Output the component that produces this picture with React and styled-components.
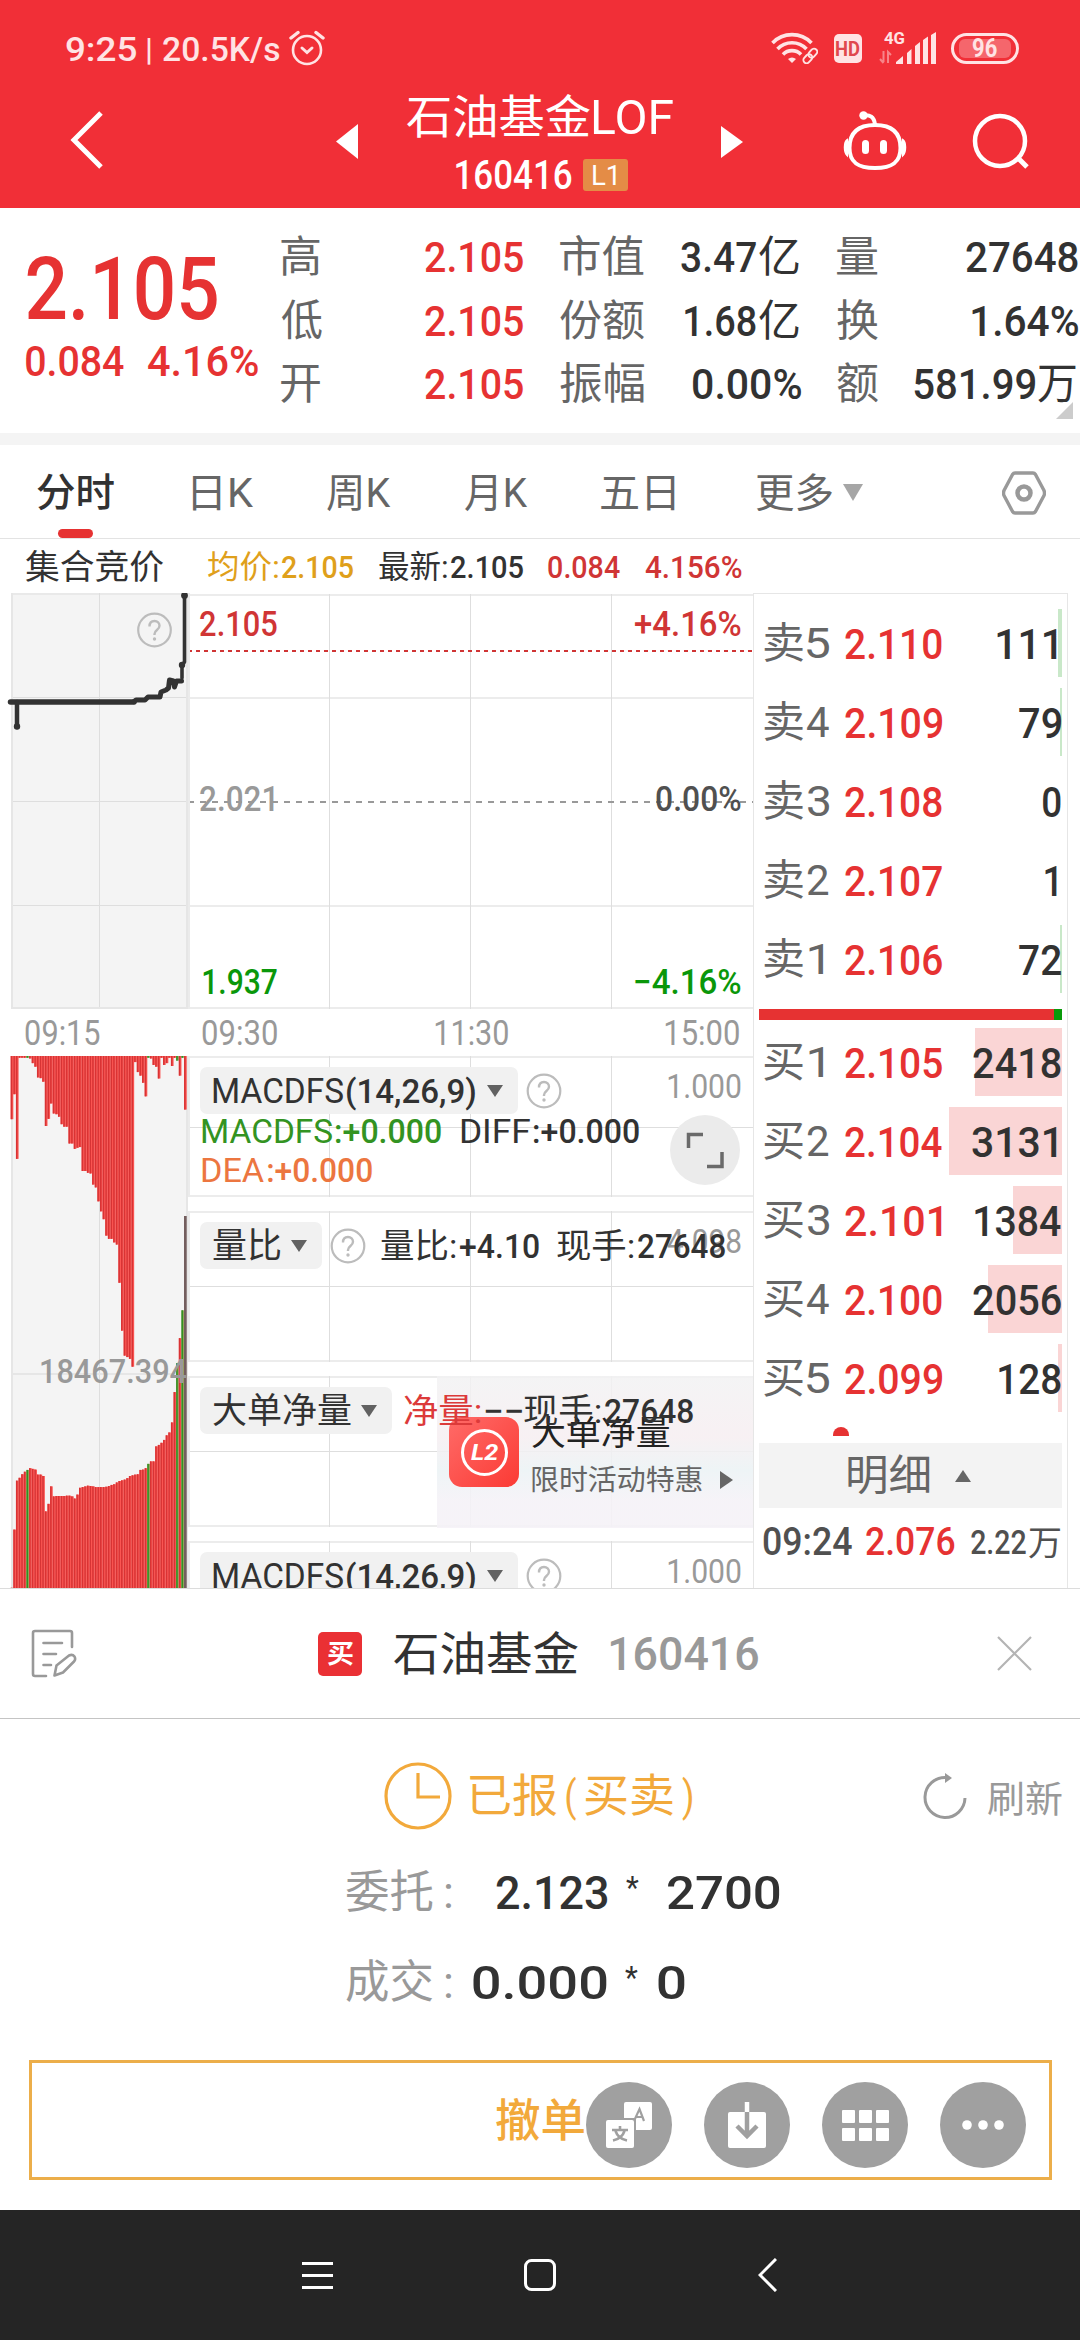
import React from 'react'
import styled, { createGlobalStyle } from 'styled-components'

const FONT = 'Roboto, "Noto Sans CJK SC", sans-serif'
const RED = '#e63232'
const DARK = '#323232'
const MID = '#666666'
const SOFT = '#999999'
const GREEN = '#0a970a'
const ORANGE = '#f2a93b'

const GlobalStyle = createGlobalStyle`
*{ box-sizing: border-box; }
body{
margin: 0;
background: #fff;
font-family: ${FONT};
}
svg{ display: block; flex: none; }
`

/* ---------- condensed text ---------- */

const Slot = styled.span`
display: block;
flex: none;
width: ${p => p.$w}px;
margin-left: ${p => p.$ml || 0}px;
font-size: ${p => p.$size}px;
font-weight: ${p => p.$weight};
font-style: ${p => p.$italic ? "italic" : "normal"};
color: ${p => p.$color};
line-height: 1.2;
white-space: nowrap;
`
const Glyphs = styled.span`
display: inline-block;
transform-origin: 0 50%;
`

const ctx = document.createElement("canvas").getContext("2d")

// squeezes the text so its ink is exactly w wide, the way the condensed digits run
function T({ w, ml, size = 43, color = DARK, weight = 500, italic, children }) {
    ctx.font = `${italic ? "italic " : ""}${weight} ${size}px ${FONT}`
    const m = ctx.measureText(children)
    const scale = w / (m.actualBoundingBoxRight + m.actualBoundingBoxLeft)
    const style = { transform: `translate(${m.actualBoundingBoxLeft * scale}px, 1px) scaleX(${scale})` }
    return (
        <Slot $w={w} $ml={ml} $size={size} $weight={weight} $italic={italic} $color={color}>
            <Glyphs style={style}>{children}</Glyphs>
        </Slot>
    )
}

const Page = styled.div`
width: 1080px;
height: 2340px;
overflow: hidden;
display: flex;
flex-direction: column;
background: #fff;
`
const Row = styled.div`
display: flex;
align-items: center;
flex: none;
height: ${p => p.$h}px;
padding-left: ${p => p.$pl || 0}px;
margin-top: ${p => p.$mt || 0}px;
`
const Push = styled.div`
flex: none;
margin-left: ${p => p.$ml}px;
`

/* ---------- header ---------- */

const Header = styled.header`
flex: none;
height: 208px;
background: #f12f37;
`
const TitleBar = styled.div`
display: flex;
height: 112px;
padding-left: 69px;
`
const TitleBlock = styled.div`
width: 266px;
margin-left: 48px;
`
const LevelTag = styled.div`
display: flex;
align-items: center;
width: 45px;
height: 32px;
margin-left: 11px;
padding-left: 10px;
border-radius: 3px;
background: #e48c46;
`
const HdTag = styled.div`
display: flex;
align-items: center;
width: 28px;
height: 29px;
margin-left: 16px;
padding-left: 2px;
border-radius: 5px;
background: #ffe3e4;
`
const Battery = styled.div`
display: flex;
align-items: center;
justify-content: center;
width: 68px;
height: 31px;
margin-left: 15px;
border: 3px solid #ffe3e4;
border-radius: 16px;
padding: 4px 5px;
`
const Charge = styled.div`
display: flex;
align-items: center;
justify-content: center;
width: 54px;
height: 19px;
border-radius: 6px;
background: #f5666c;
`

const Alarm = () => (
    <svg width="36" height="36" viewBox="0 0 36 36" fill="none" stroke="#ffe3e4" strokeLinecap="round">
        <circle cx="18" cy="20" r="14" strokeWidth="2.6" />
        <path d="M13 18l5 4.5 5-4.5" strokeWidth="3" />
        <path d="M2 8l7-5.5M34 8l-7-5.5" strokeWidth="3.4" />
    </svg>
)

const Wifi = () => (
    <svg width="47" height="32" viewBox="0 0 47 32" fill="none" stroke="#ffe3e4">
        <path d="M1.5 11a27 27 0 0 1 39 0" strokeWidth="3.6" />
        <path d="M6.5 17a20 20 0 0 1 29 0" strokeWidth="3.6" />
        <path d="M12 22.5a12.5 12.5 0 0 1 18 0" strokeWidth="3.6" />
        <path d="M17 27a6 6 0 0 1 8 0l-4 4z" fill="#ffe3e4" stroke="none" />
        <g strokeWidth="1.9" transform="rotate(-48 39 24)">
            <rect x="30.5" y="21" width="10" height="6.4" rx="3.2" />
            <rect x="38" y="21" width="10" height="6.4" rx="3.2" />
        </g>
    </svg>
)

const Signal = () => (
    <svg width="57" height="34" viewBox="0 0 57 34" fill="#ffe3e4" overflow="visible">
        <text x="5" y="13" fontSize="16" fontWeight="700" textLength="21" lengthAdjust="spacingAndGlyphs">4G</text>
        <path d="M17 33v-2l7-6v8zM28 33V22l4.500-4v15zM36 33V15l5-4v22zM44 33V9l5-3.500V33zM52 33V4l5-3v32z" />
        <path d="M4.500 20v11M1 28l3.500 4M9 32V21l3 3" fill="none" stroke="#f78489" strokeWidth="2" />
    </svg>
)

const Robot = () => (
    <svg width="66" height="62" viewBox="0 0 66 62" fill="none" stroke="#fff" strokeWidth="4">
        <path d="M33 15c17 0 25.500 8 25.500 23 0 14-8 20-25.500 20S7.500 52 7.500 38C7.500 23 16 15 33 15z" />
        <path d="M21 5.500c7-1 11 1 12 9" />
        <circle cx="21.500" cy="5.500" r="4.200" fill="#fff" stroke="none" />
        <path d="M5 30c-3 2-3 12 0 15zM61 30c3 2 3 12 0 15z" fill="#fff" strokeWidth="2" />
        <rect x="20" y="30" width="7" height="14" rx="3.500" fill="#fff" stroke="none" />
        <rect x="38" y="30" width="7" height="14" rx="3.500" fill="#fff" stroke="none" />
    </svg>
)

function StatusBar() {
    const pale = "#ffe3e4"
    return (
        <Row $h={96} $pl={66}>
            <T w={70} size={34} color={pale}>9:25</T>
            <T w={4} ml={11} size={32} color={pale}>|</T>
            <T w={117} ml={12} size={34} color={pale}>20.5K/s</T>
            <Push $ml={9}><Alarm /></Push>
            <Push $ml={446}><Wifi /></Push>
            <HdTag><T w={24} size={20} weight={700} color="#e0474d">HD</T></HdTag>
            <Push $ml={17}><Signal /></Push>
            <Battery><Charge><T w={24} size={25} weight={700} color={pale}>96</T></Charge></Battery>
        </Row>
    )
}

/* ---------- quote ---------- */

const Quote = styled.section`
display: flex;
flex: none;
height: 225px;
`
const PriceBlock = styled.div`
width: 281px;
padding: 32px 0 0 26px;
`
const Figures = styled.div`
position: relative;
width: 799px;
padding-top: 17px;
`
const MoreCorner = styled.svg`
position: absolute;
right: 7px;
bottom: 14px;
`
const Band = styled.div`
flex: none;
height: 12px;
background: #f4f4f4;
`

const Label = ({ w, ml, children }) => <T w={w} ml={ml} color={MID} weight={400} size={43}>{children}</T>

/* ---------- tabs ---------- */

const Tabs = styled.nav`
position: relative;
display: flex;
flex: none;
align-items: center;
height: 94px;
padding: 2px 0 0 37px;
border-bottom: 1px solid #e3e3e3;
`
const TabMark = styled.div`
position: absolute;
left: 58px;
bottom: 0;
width: 35px;
height: 9px;
border-radius: 5px;
background: ${RED};
`

/* ---------- charts ---------- */

const Board = styled.section`
display: flex;
flex: none;
height: 995px;
overflow: hidden;
`
const Auction = styled.div`
flex: none;
width: 188px;
`
const Session = styled.div`
flex: none;
width: 565px;
`
const Backdrop = styled.svg`
position: absolute;
left: 0;
top: 0;
`
const Plot = styled.div`
position: relative;
height: 416px;
padding-top: 12px;
`
const Indicator = styled.div`
position: relative;
height: ${p => p.$h}px;
margin-bottom: 14px;
padding-top: 11px;
`
const Over = styled.div`
position: relative;
`
const Picker = styled.div`
display: flex;
align-items: center;
flex: none;
width: ${p => p.$w}px;
height: 47px;
margin-left: 12px;
padding-left: 13px;
border-radius: 7px;
background: #f1f1f1;
`
const Scale = styled.div`
position: absolute;
top: 9px;
right: 12px;
`
const Expand = styled.div`
position: absolute;
left: 482px;
top: 59px;
`
const Promo = styled.div`
position: absolute;
left: 249px;
top: 0;
display: flex;
width: 316px;
height: 152px;
padding: 41px 0 0 12px;
background: linear-gradient(180deg, rgba(242,242,243,.85), rgba(246,238,241,.85) 40%, rgba(236,243,245,.9) 62%, rgba(245,242,247,.9) 82%);
`
const PromoIcon = styled.div`
display: flex;
align-items: center;
justify-content: center;
width: 70px;
height: 70px;
border-radius: 13px;
background: linear-gradient(135deg, #ff6b68, #fb3a34);
`
const Ring = styled.div`
display: flex;
align-items: center;
justify-content: center;
width: 47px;
height: 47px;
border: 3px solid #fff;
border-radius: 50%;
`
const PromoText = styled.div`
margin-left: 13px;
margin-top: -6px;
`

const Help = () => (
    <svg width="36" height="36" viewBox="0 0 36 36">
        <circle cx="18" cy="18" r="16.300" fill="none" stroke="#bcbcbc" strokeWidth="2.200" />
        <path d="M13 14.500c0-3.500 2-5.500 5-5.500s5 2 5 4.700c0 4.300-5 4.300-5 8.300v1" fill="none" stroke="#bcbcbc" strokeWidth="2.400" />
        <circle cx="18" cy="27" r="1.700" fill="#bcbcbc" />
    </svg>
)
const Down = () => <svg width="16" height="12"><path d="M0 0h16L8 12z" fill="#626262" /></svg>

const VLINES = [141.5, 282.5, 423.5]

function Grid({ h, mid }) {
    return (
        <Backdrop width="565" height={h}>
            <path d={`M0 1H565M0 ${h - 1}H565`} stroke="#ececec" strokeWidth="2" />
            {mid && <path d={`M0 ${mid}H565`} stroke="#dedede" />}
            {VLINES.map(x => <path key={x} d={`M${x} 0V${h}`} stroke="#dedede" />)}
            <path d={`M1 0V${h}`} stroke="#ebebeb" strokeWidth="2" />
        </Backdrop>
    )
}

const drops = [222, 152, 333, 50, 50, 50, 50, 52, 65, 75, 105, 107, 117, 241, 221, 178, 206, 208, 215, 236, 243, 243, 290,
    290, 305, 302, 300, 367, 367, 372, 374, 405, 413, 452, 480, 502, 548, 557, 557, 567, 573, 680, 814, 884, 888, 893, 915,
    62, 90, 100, 120, 158, 50, 52, 70, 75, 108, 50, 70, 65, 50, 73, 50, 58, 100, 50, 195]
const rises = [1534, 1371, 1234, 1226, 1216, 1209, 1204, 1199, 1201, 1203, 1217, 1217, 1221, 1320, 1299, 1250, 1278, 1277,
    1277, 1277, 1277, 1276, 1276, 1278, 1284, 1273, 1254, 1252, 1250, 1248, 1249, 1250, 1252, 1252, 1252, 1252, 1251, 1249,
    1246, 1244, 1239, 1235, 1233, 1231, 1227, 1221, 1219, 1217, 1216, 1204, 1203, 1199, 1187, 1180, 1180, 1138, 1134, 1128,
    1120, 1107, 1099, 1071, 986, 905, 835, 757, 493]
const fallers = [6, 52, 63, 65]

function AuctionPrice() {
    return (
        <svg width="188" height="416">
            <rect x="11" width="177" height="416" fill="#f4f4f4" />
            <path d="M11 1H188M11 104.500H188M11 208.500H188M11 312.500H188M99.500 0V416" stroke="#dedede" fill="none" />
            <path d="M12 0V416M187 0V416M11 415H188" stroke="#e6e6e6" strokeWidth="2" />
            <g fill="none" stroke="#323232" strokeLinejoin="round" strokeLinecap="round">
                <path d="M10.500 109H134" strokeWidth="5.500" />
                <path d="M17 109V134" strokeWidth="4.500" />
                <path d="M134 108.500l2-1.500h9l3-3h12l1-5 5-2 2.500-2 1-8 4 1 1 6 2-6h5" strokeWidth="5" />
                <path d="M182 85V72l2.500-3V3" strokeWidth="3.600" />
            </g>
            <g fill="#323232">
                <circle cx="17" cy="133.500" r="3.200" />
                <circle cx="182" cy="72" r="3.200" />
                <circle cx="184.500" cy="2.500" r="3.400" />
            </g>
            <g transform="translate(136.500 19)"><Help /></g>
        </svg>
    )
}

function AuctionVolume() {
    const step = 2.627
    return (
        <svg width="188" height="532">
            <rect x="11" width="177" height="532" fill="#f4f4f4" />
            <path d="M99.500 0V532" stroke="#dedede" />
            <path d="M11 318H188M12 0V532M187 0V532" stroke="#e6e6e6" strokeWidth="2" />
            {drops.map((y, i) => (
                <g key={i} transform={`translate(${10.7 + i * step} 0)`}>
                    <rect width={step} height={(y - 45) / 2.8} fill={fallers.includes(i) ? "#7ba95a" : "#fb5552"} />
                    <rect width="1.500" height={(y - 45) / 2.8} fill={fallers.includes(i) ? "#2f9020" : "#d83334"} />
                </g>
            ))}
            {rises.map((y, i) => (
                <g key={i} transform={`translate(${10.7 + i * step} ${(y - 45) / 2.8})`}>
                    <rect width={step} height={532} fill={i === 66 ? "#735e5e" : fallers.includes(i) ? "#8fa357" : "#fb5552"} />
                    <rect width="1.500" height={532} fill={i === 66 ? "#735e5e" : fallers.includes(i) ? "#2f9020" : "#d83334"} />
                </g>
            ))}
            <text x="39" y="326.500" fontSize="34" fontWeight="500" fill="#999" textLength="148" lengthAdjust="spacingAndGlyphs">18467.394</text>
        </svg>
    )
}

function MacdPicker() {
    return (
        <Row $h={47}>
            <Picker $w={318}>
                <T w={130} size={35.5} weight={400}>MACDFS</T>
                <T w={128} ml={4} size={34}>(14,26,9)</T>
                <Push $ml={12}><Down /></Push>
            </Picker>
            <Push $ml={8}><Help /></Push>
        </Row>
    )
}

/* ---------- order book ---------- */

const Book = styled.aside`
flex: none;
width: 315px;
padding-top: 10px;
border: 1px solid #e6e6e6;
border-bottom: 0;
`
const Level = styled.div`
position: relative;
display: flex;
align-items: center;
height: 79px;
padding-left: 10px;
`
const Depth = styled.div`
position: absolute;
right: 5px;
top: 5px;
height: 68px;
width: ${p => p.$w}px;
background: ${p => p.$sell ? "#c9e8c9" : "#fad5d5"};
`
const Amount = styled.div`
position: absolute;
right: ${p => p.$right}px;
`
const Ratio = styled.div`
width: 303px;
height: 11px;
margin: 10px 0 3px 5px;
border-right: 8px solid #0a9a0a;
background: ${RED};
`
const DotClip = styled.div`
height: 9px;
width: 16px;
margin: 9px 0 0 79px;
overflow: hidden;
&::before{
content: "";
display: block;
width: 16px;
height: 16px;
border-radius: 50%;
background: ${RED};
}
`
const Detail = styled.div`
display: flex;
align-items: center;
width: 303px;
height: 65px;
margin: 7px 0 0 5px;
padding-left: 89px;
background: #f3f3f3;
`

const sells = [
    ["卖", "5", "2.110", "111", 60, 4],
    ["卖", "4", "2.109", "79", 42, 2],
    ["卖", "3", "2.108", "0", 18, 0],
    ["卖", "2", "2.107", "1", 12, 0],
    ["卖", "1", "2.106", "72", 42, 2],
]
const buys = [
    ["买", "1", "2.105", "2418", 88, 87],
    ["买", "2", "2.104", "3131", 85, 113],
    ["买", "3", "2.101", "1384", 86, 49],
    ["买", "4", "2.100", "2056", 88, 74],
    ["买", "5", "2.099", "128", 62, 4],
]

const BookRow = ({ row, sell }) => {
    const [side, n, price, amount, w, depth] = row
    return (
        <Level>
            {depth > 0 && <Depth $w={depth} $sell={sell} />}
            <T w={39} color={MID} weight={400} size={42}>{side}</T>
            <T w={n === "1" ? 14 : 22} ml={n === "1" ? 6 : 4} color={MID} weight={400} size={42}>{n}</T>
            <T w={97} ml={n === "1" ? 22 : 16} color={RED}>{price}</T>
            <Amount $right={amount.endsWith("1") ? 10 : 6}><T w={w}>{amount}</T></Amount>
        </Level>
    )
}

/* ---------- order sheet ---------- */

const Sheet = styled.section`
flex: none;
height: 622px;
border-top: 1px solid #dcdcdc;
`
const SheetHead = styled.div`
display: flex;
align-items: center;
height: 130px;
padding-left: 31px;
border-bottom: 1px solid #c4c4c4;
`
const BuyTag = styled.div`
display: flex;
align-items: center;
justify-content: center;
width: 44px;
height: 44px;
margin-left: 241px;
border-radius: 5px;
background: #ea3034;
`
const Star = styled.div`
height: 50px;
`
const CancelButton = styled.button`
display: flex;
align-items: center;
width: 1023px;
height: 120px;
margin: 33px 0 0 29px;
padding: 10px 0 0 464px;
border: 3px solid #ecae4a;
background: #fff;
font-family: inherit;
`
const CancelText = styled.span`
padding-bottom: 9px;
`
const Round = styled.span`
display: flex;
flex: none;
align-items: center;
justify-content: center;
width: 86px;
height: 86px;
margin-left: ${p => p.$ml}px;
border-radius: 50%;
background: #a0a0a0;
`
const NavBar = styled.footer`
display: flex;
flex: none;
align-items: center;
height: 130px;
padding-left: 302px;
background: #252525;
`

const Note = () => (
    <svg width="46" height="50" viewBox="0 0 46 50" fill="none" stroke="#999" strokeWidth="2.600" strokeLinecap="round" strokeLinejoin="round">
        <path d="M41 18V4q0-2-2-2H4Q2 2 2 4V45q0 2 2 2h11" />
        <path d="M12.500 14H31M12.500 25H25M12.500 36H20" />
        <path d="M23.500 46.500l2-10L38 26.500q3.500-1.500 5.500 1 1.500 3-.5 5L32 43.500z" />
    </svg>
)

export default function App() {
    return (
        <Page>
            <GlobalStyle />
            <Header>
                <StatusBar />
                <TitleBar>
                    <svg width="36" height="80"><path d="M32 17L5 44 32 71" fill="none" stroke="#fff" strokeWidth="5" /></svg>
                    <svg width="254" height="70"><path d="M231 45.500L253 28v35z" fill="#fff" /></svg>
                    <TitleBlock>
                        <Row $h={42}>
                            <T w={183} size={46} weight={400} color="#fff">石油基金</T>
                            <T w={79} ml={4} size={49} weight={400} color="#fff">LOF</T>
                        </Row>
                        <Row $h={32} $mt={21} $pl={49}>
                            <T w={116} size={40} color="#fff">160416</T>
                            <LevelTag><T w={23} size={27} weight={400} color="#fff">L1</T></LevelTag>
                        </Row>
                    </TitleBlock>
                    <Push $ml={48}><svg width="23" height="70"><path d="M0 30v32l22-16z" fill="#fff" /></svg></Push>
                    <Row $h={90} $pl={98}>
                        <Robot />
                        <Push $ml={64}>
                            <svg width="60" height="60" fill="none" stroke="#fff" strokeWidth="4.500">
                                <circle cx="28" cy="30" r="25" />
                                <path d="M46 47l9 9" strokeWidth="5" />
                            </svg>
                        </Push>
                    </Row>
                </TitleBar>
            </Header>

            <Quote>
                <PriceBlock>
                    <Row $h={96}><T w={190} ml={1} size={88} color={RED}>2.105</T></Row>
                    <Row $h={50}>
                        <T w={98} color={RED}>0.084</T>
                        <T w={110} ml={24} color={RED}>4.16%</T>
                    </Row>
                </PriceBlock>
                <Figures>
                    <Row $h={64}>
                        <Label w={39}>高</Label>
                        <T w={98} ml={105} color={RED}>2.105</T>
                        <Label w={84} ml={37}>市值</Label>
                        <T w={75} ml={37}>3.47</T><T w={40} ml={3} weight={400}>亿</T>
                        <Label w={41} ml={38}>量</Label>
                        <T w={112} ml={88}>27648</T>
                    </Row>
                    <Row $h={63}>
                        <Label w={41}>低</Label>
                        <T w={98} ml={103} color={RED}>2.105</T>
                        <Label w={84} ml={37}>份额</Label>
                        <T w={71} ml={41}>1.68</T><T w={40} ml={3} weight={400}>亿</T>
                        <Label w={41} ml={38}>换</Label>
                        <T w={106} ml={94}>1.64%</T>
                    </Row>
                    <Row $h={64}>
                        <Label w={39}>开</Label>
                        <T w={98} ml={105} color={RED}>2.105</T>
                        <Label w={84} ml={37}>振幅</Label>
                        <T w={108} ml={49}>0.00%</T>
                        <Label w={41} ml={36}>额</Label>
                        <T w={121} ml={36}>581.99</T><T w={38} ml={3} weight={400}>万</T>
                    </Row>
                    <MoreCorner width="17" height="17"><path d="M17 0V17H0z" fill="#ccc" /></MoreCorner>
                </Figures>
            </Quote>
            <Band />

            <Tabs>
                <T w={77} size={39}>分时</T>
                <T w={61} ml={79} size={40} weight={400} color={MID}>日K</T>
                <T w={64} ml={73} size={40} weight={400} color={MID}>周K</T>
                <T w={63} ml={74} size={40} weight={400} color={MID}>月K</T>
                <T w={74} ml={73} size={40} weight={400} color={MID}>五日</T>
                <T w={76} ml={81} size={40} weight={400} color={MID}>更多</T>
                <Push $ml={11}><svg width="20" height="17"><path d="M0 0H20L10 17z" fill="#a6a6a6" /></svg></Push>
                <Push $ml={139}>
                    <svg width="44" height="44" fill="none" stroke="#999" strokeWidth="3.400" strokeLinejoin="round">
                        <path d="M13 2H31Q32.500 2 33.500 3.500L42 19.500Q43 22 42 24.500L33.500 40.500Q32.500 42 31 42H13Q11.500 42 10.500 40.500L2 24.500Q1 22 2 19.500L10.500 3.500Q11.500 2 13 2z" />
                        <circle cx="22" cy="22" r="6.500" strokeWidth="4.500" />
                    </svg>
                </Push>
                <TabMark />
            </Tabs>

            <Row $h={54} $pl={25}>
                <T w={138} size={34} weight={400}>集合竞价</T>
                <T w={70} ml={45} size={32} weight={400} color="#dfa01b">均价:</T>
                <T w={71} ml={4} size={32} color="#dfa01b">2.105</T>
                <T w={68} ml={26} size={32} weight={400}>最新:</T>
                <T w={72} ml={4} size={32}>2.105</T>
                <T w={72} ml={25} size={32} color="#d03535">0.084</T>
                <T w={97} ml={25} size={32} color="#d03535">4.156%</T>
            </Row>

            <Board>
                <Auction>
                    <AuctionPrice />
                    <Row $h={47} $pl={25}><T w={75} size={35} color={SOFT} weight={400}>09:15</T></Row>
                    <AuctionVolume />
                </Auction>

                <Session>
                    <Plot>
                        <Backdrop width="565" height="416">
                            <path d="M0 2H565M0 105H565M0 313H565M0 415H565" stroke="#ececec" strokeWidth="2" />
                            {VLINES.map(x => <path key={x} d={`M${x} 1V416`} stroke="#dedede" />)}
                            <path d="M0 58H565" stroke="#d03535" strokeWidth="2" strokeDasharray="4 4" />
                            <path d="M0 209H565" stroke="#999" strokeWidth="2" strokeDasharray="6 6" />
                            <path d="M1 0V416" stroke="#ebebeb" strokeWidth="2" />
                        </Backdrop>
                        <Over>
                            <Row $h={38} $pl={12}>
                                <T w={77} size={35} color="#d03535">2.105</T>
                                <T w={106} ml={358} size={35} color="#d03535">+4.16%</T>
                            </Row>
                            <Row $h={38} $pl={12} $mt={137}>
                                <T w={74} size={35} color={SOFT}>2.021</T>
                                <T w={85} ml={382} size={35} color="#505050">0.00%</T>
                            </Row>
                            <Row $h={38} $pl={15} $mt={145}>
                                <T w={74} size={35} color={GREEN}>1.937</T>
                                <T w={106} ml={358} size={35} color={GREEN}>−4.16%</T>
                            </Row>
                        </Over>
                    </Plot>
                    <Row $h={47} $pl={14}>
                        <T w={75} size={35} weight={400} color={SOFT}>09:30</T>
                        <T w={73} ml={158} size={35} weight={400} color={SOFT}>11:30</T>
                        <T w={74} ml={157} size={35} weight={400} color={SOFT}>15:00</T>
                    </Row>

                    <Indicator $h={141}>
                        <Grid h={141} mid={71.5} />
                        <Over>
                            <MacdPicker />
                            <Row $h={38} $pl={14} $mt={-3}>
                                <T w={130} size={34} weight={400} color="#339322">MACDFS</T>
                                <T w={105} ml={4} size={34} color="#339322">:+0.000</T>
                                <T w={69} ml={20} size={34} weight={400}>DIFF</T>
                                <T w={105} ml={4} size={34}>:+0.000</T>
                            </Row>
                            <Row $h={38} $pl={14} $mt={1}>
                                <T w={62} size={34} weight={400} color="#ec7640">DEA</T>
                                <T w={104} ml={4} size={34} color="#ec7640">:+0.000</T>
                            </Row>
                        </Over>
                        <Scale><T w={73} size={34} color={SOFT} weight={400}>1.000</T></Scale>
                        <Expand>
                            <svg width="70" height="70">
                                <circle cx="35" cy="35" r="35" fill="#ebebeb" />
                                <path d="M18.500 33V19.500H33M37 51.500H52V37" fill="none" stroke="#6a6a6a" strokeWidth="3.500" />
                            </svg>
                        </Expand>
                    </Indicator>

                    <Indicator $h={151}>
                        <Grid h={151} mid={75.5} />
                        <Scale><T w={74} size={34} color={SOFT} weight={400}>4.098</T></Scale>
                        <Over>
                            <Row $h={47}>
                                <Picker $w={122}>
                                    <T w={67} size={35} weight={400}>量比</T>
                                    <Push $ml={11}><Down /></Push>
                                </Picker>
                                <Push $ml={8}><Help /></Push>
                                <T w={75} ml={15} size={34} weight={400}>量比:</T>
                                <T w={79} ml={4} size={34}>+4.10</T>
                                <T w={77} ml={18} size={34} weight={400}>现手:</T>
                                <T w={87} ml={4} size={34}>27648</T>
                            </Row>
                        </Over>
                    </Indicator>

                    <Indicator $h={151}>
                        <Grid h={151} mid={75.5} />
                        <Promo>
                            <PromoIcon><Ring><T w={27} size={22} weight={700} italic color="#fff">L2</T></Ring></PromoIcon>
                            <PromoText>
                                <Row $h={44}><T w={137} size={34.5} weight={400} color="#222">大单净量</T></Row>
                                <Row $h={50}>
                                    <T w={170} size={28.5} weight={400} color={MID}>限时活动特惠</T>
                                    <Push $ml={18}><svg width="13" height="18"><path d="M0 0v18l13-9z" fill="#666" /></svg></Push>
                                </Row>
                            </PromoText>
                        </Promo>
                        <Over>
                            <Row $h={47}>
                                <Picker $w={192}>
                                    <T w={138} size={35} weight={400}>大单净量</T>
                                    <Push $ml={10}><Down /></Push>
                                </Picker>
                                <T w={77} ml={12} size={34} weight={400} color="#dc3a3a">净量:</T>
                                <T w={37} ml={4} size={34}>−−</T>
                                <T w={77} ml={2} size={34} weight={400}>现手:</T>
                                <T w={88} ml={4} size={34}>27648</T>
                            </Row>
                        </Over>
                    </Indicator>

                    <Indicator $h={151}>
                        <Grid h={151} />
                        <Over><MacdPicker /></Over>
                        <Scale><T w={73} size={34} color={SOFT} weight={400}>1.000</T></Scale>
                    </Indicator>
                </Session>

                <Book>
                    {sells.map(r => <BookRow key={r[1]} row={r} sell />)}
                    <Ratio />
                    {buys.map(r => <BookRow key={r[1]} row={r} />)}
                    <DotClip />
                    <Detail>
                        <T w={82} size={42} weight={400} color={MID}>明细</T>
                        <Push $ml={25}><svg width="16" height="12"><path d="M0 12H16L8 0z" fill="#666" /></svg></Push>
                    </Detail>
                    <Row $h={68} $pl={9}>
                        <T w={89} size={38} color="#505050">09:24</T>
                        <T w={89} ml={14} size={38} color={RED}>2.076</T>
                        <T w={55} ml={16} size={33} color="#505050">2.22</T>
                        <T w={31} ml={3} size={34} weight={400} color="#505050">万</T>
                    </Row>
                </Book>
            </Board>

            <Sheet>
                <SheetHead>
                    <Note />
                    <BuyTag><T w={26} size={26} weight={700} color="#fff">买</T></BuyTag>
                    <T w={184} ml={32} size={46} weight={400}>石油基金</T>
                    <T w={148} ml={32} size={47} weight={500} color={SOFT}>160416</T>
                    <Push $ml={239}><svg width="35" height="35"><path d="M1 1L34 34M34 1L1 34" stroke="#b4b4b4" strokeWidth="2.200" /></svg></Push>
                </SheetHead>

                <Row $h={68} $mt={43} $pl={384}>
                    <svg width="68" height="68" fill="none" stroke={ORANGE} strokeWidth="3.200">
                        <circle cx="34" cy="34" r="32" />
                        <path d="M34 11V35H56" />
                    </svg>
                    <T w={87} ml={18} size={45} weight={400} color={ORANGE}>已报</T>
                    <T w={10} ml={9} size={43} weight={400} color={ORANGE}>(</T>
                    <T w={88} ml={9} size={45} weight={400} color={ORANGE}>买卖</T>
                    <T w={10} ml={9} size={43} weight={400} color={ORANGE}>)</T>
                    <Push $ml={230}>
                        <svg width="46" height="46" fill="none" stroke={SOFT} strokeWidth="3">
                            <path d="M24 4.500A20 20 0 1 0 43 25" />
                            <path d="M23 0l7 5-7 5z" fill={SOFT} stroke="none" />
                        </svg>
                    </Push>
                    <Row $h={60} $mt={8}><T w={74} ml={20} size={37} weight={400} color={SOFT}>刷新</T></Row>
                </Row>
                <Row $h={90} $mt={17} $pl={346}>
                    <T w={87} size={45} weight={400} color={SOFT}>委托</T>
                    <T w={6} ml={12} size={45} weight={400} color={SOFT}>:</T>
                    <T w={112} ml={45} size={47}>2.123</T>
                    <Star><T w={13} ml={18} size={32} weight={400}>*</T></Star>
                    <T w={113} ml={28} size={47}>2700</T>
                </Row>
                <Row $h={90} $pl={346}>
                    <T w={87} size={45} weight={400} color={SOFT}>成交</T>
                    <T w={6} ml={12} size={45} weight={400} color={SOFT}>:</T>
                    <T w={134} ml={22} size={47}>0.000</T>
                    <Star><T w={13} ml={18} size={32} weight={400}>*</T></Star>
                    <T w={27} ml={20} size={47}>0</T>
                </Row>

                <CancelButton>
                    <CancelText><T w={88} size={45} color={ORANGE}>撤单</T></CancelText>
                    <Round $ml={2}>
                        <svg width="46" height="46">
                            <rect x="18" width="28" height="28" rx="2" fill="#fff" />
                            <path d="M28 19l5.500-12L38 19M30 15h7" fill="none" stroke="#a0a0a0" strokeWidth="2.200" />
                            <rect x="-2" y="16" width="32" height="32" rx="2" fill="#a0a0a0" />
                            <rect y="18" width="28" height="28" rx="2" fill="#fff" />
                            <path d="M6 28H22M14 24v4M9.500 29q2.500 7.500 11.500 9.500M18.500 29q-2.500 7.500-11.500 9.500" fill="none" stroke="#a0a0a0" strokeWidth="2.600" />
                        </svg>
                    </Round>
                    <Round $ml={32}>
                        <svg width="38" height="46">
                            <rect y="10" width="38" height="36" rx="2" fill="#fff" />
                            <path d="M19 0V10" stroke="#fff" strokeWidth="4.500" />
                            <path d="M19 10V33M9 24l10 10 10-10" fill="none" stroke="#a0a0a0" strokeWidth="4.500" />
                        </svg>
                    </Round>
                    <Round $ml={32}>
                        <svg width="47" height="31" fill="#fff">
                            {[0, 17, 34].map(x => [0, 18].map(y => <rect key={x + "-" + y} x={x} y={y} width="13" height="13" rx="1" />))}
                        </svg>
                    </Round>
                    <Round $ml={32}>
                        <svg width="42" height="10" fill="#fff"><circle cx="5" cy="5" r="4.800" /><circle cx="21" cy="5" r="4.800" /><circle cx="37" cy="5" r="4.800" /></svg>
                    </Round>
                </CancelButton>
            </Sheet>

            <NavBar>
                <svg width="31" height="32" stroke="#fff" strokeWidth="3"><path d="M0 4.500H31M0 16.500H31M0 28.500H31" /></svg>
                <Push $ml={191}><svg width="32" height="32" fill="none" stroke="#fff" strokeWidth="3"><rect x="1.500" y="1.500" width="29" height="29" rx="6" /></svg></Push>
                <Push $ml={202}><svg width="19" height="34" fill="none" stroke="#fff" strokeWidth="3"><path d="M18 1L2 17 18 33" /></svg></Push>
            </NavBar>
        </Page>
    )
}
